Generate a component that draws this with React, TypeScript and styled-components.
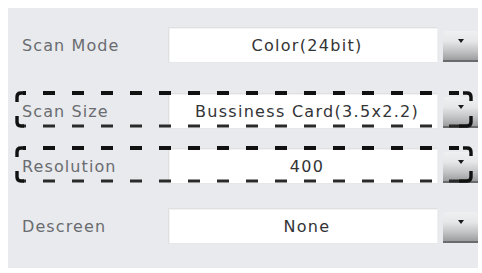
import React from "react";
import styled, { createGlobalStyle } from "styled-components";

const GlobalStyle = createGlobalStyle`
  html, body {
    margin: 0;
    padding: 0;
    background: #ffffff;
  }
  body {
    width: 482px;
    height: 273px;
    overflow: hidden;
  }
`;

type Setting = {
  label: string;
  value: string;
  top: number;
  marked?: boolean;
};

const settings: Setting[] = [
  { label: "Scan Mode", value: "Color(24bit)", top: 0 },
  { label: "Scan Size", value: "Bussiness Card(3.5x2.2)", top: 30, marked: true },
  { label: "Resolution", value: "400", top: 19, marked: true },
  { label: "Descreen", value: "None", top: 24 },
];

export default function App() {
  return (
    <>
      <GlobalStyle />
      <Panel>
        {settings.map((s) => (
          <Row key={s.label} $top={s.top}>
            <Label>{s.label}</Label>
            <Field>{s.value}</Field>
            <DropButton aria-label="open">
              <Arrow />
            </DropButton>
            {s.marked && <Marker />}
          </Row>
        ))}
      </Panel>
    </>
  );
}

// dashed highlight frame drawn over a row
function Marker() {
  const W = 458;
  const H = 37;
  return (
    <MarkerSvg width={W} height={H} viewBox={`0 0 ${W} ${H}`}>
      <g fill="none" strokeLinecap="butt">
        <line x1={8} y1={2} x2={W - 14} y2={2} stroke="#111" strokeWidth={3.8} strokeDasharray="12 17" strokeDashoffset={9} />
        <line x1={8} y1={H - 2} x2={W - 14} y2={H - 2} stroke="#2a2a2a" strokeWidth={3} strokeDasharray="12 17" strokeDashoffset={9} />
        <path d="M2 11 L2 6 Q2 2 6 2 L9 2" stroke="#111" strokeWidth={3.4} />
        <path d="M2 25 L2 31 Q2 35 6 35 L9 35" stroke="#111" strokeWidth={3.4} />
        <path d={`M${W - 10} 2 L${W - 6} 2 Q${W - 2} 2 ${W - 2} 6 L${W - 2} 10`} stroke="#111" strokeWidth={3.4} />
        <path d={`M${W - 2} 25 L${W - 2} 31 Q${W - 2} 35 ${W - 6} 35 L${W - 14} 35`} stroke="#111" strokeWidth={3.4} />
      </g>
    </MarkerSvg>
  );
}

const Panel = styled.div`
  margin: 8px 4px 0 8px;
  width: 470px;
  height: 260px;
  box-sizing: border-box;
  padding: 19px 5px 0 14px;
  background: #e8eaed;
  display: flex;
  flex-direction: column;
`;

const Row = styled.div<{ $top: number }>`
  position: relative;
  margin-top: ${({ $top }) => $top}px;
  height: 36px;
  display: grid;
  grid-template-columns: 141px 270px 35px;
  column-gap: 5px;
  align-items: center;
`;

const Label = styled.span`
  font-family: "DejaVu Sans", "Liberation Sans", sans-serif;
  font-size: 16px;
  letter-spacing: 1.1px;
  color: #6a6c70;
  white-space: nowrap;
`;

const Field = styled.div`
  height: 36px;
  box-sizing: border-box;
  background: #ffffff;
  border: 1px solid #dfe0e2;
  border-right-color: #eef0f2;
  border-bottom-color: #e6e7e9;
  box-shadow: inset 1px 1px 0 #f3f3f3;
  display: flex;
  align-items: center;
  justify-content: center;
  padding-left: 8px;
  font-family: "DejaVu Sans", "Liberation Sans", sans-serif;
  font-size: 16px;
  letter-spacing: 1.3px;
  color: #333436;
  white-space: nowrap;
`;

const DropButton = styled.div`
  position: relative;
  align-self: end;
  height: 31px;
  margin-bottom: 1px;
  box-sizing: border-box;
  border-radius: 4px 4px 0 0;
  background: linear-gradient(#eef0f1 0%, #e6e7e8 35%, #c2c3c4 70%, #9c9d9f 100%);
  border-bottom: 2px solid #6a6b6d;
  display: flex;
  justify-content: center;
`;

const Arrow = styled.span`
  margin-top: 8px;
  width: 0;
  height: 0;
  border-left: 3.5px solid transparent;
  border-right: 3.5px solid transparent;
  border-top: 4px solid #1b1b1b;
`;

const MarkerSvg = styled.svg`
  position: absolute;
  left: -7px;
  top: -2px;
  pointer-events: none;
`;
